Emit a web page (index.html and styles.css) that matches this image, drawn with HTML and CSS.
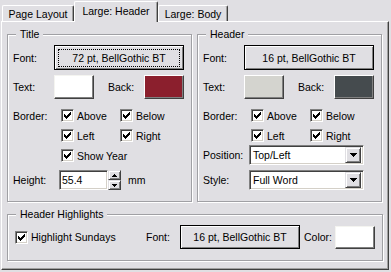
FILE: index.html
```html
<!DOCTYPE html>
<html>
<head>
<meta charset="utf-8">
<title>Large: Header</title>
<link rel="stylesheet" href="styles.css">
</head>
<body>
<div class="tabs">
  <div class="tab tab-first">Page Layout</div>
  <div class="tab tab-active">Large: Header</div>
  <div class="tab tab-last">Large: Body</div>
</div>
<div class="panel">
  <div class="cols">
    <div class="group">
      <div class="legend">Title</div>
      <div class="row r-font"><span class="lbl">Font:</span><div class="btn btn-wide btn-focused"><span class="focus">72 pt, BellGothic BT</span></div></div>
      <div class="row r-color"><span class="lbl">Text:</span><span class="swatch sw-white"></span><span class="lbl lbl-back">Back:</span><span class="swatch sw-red"></span></div>
      <div class="row r-chk1"><span class="lbl lbl-chk">Border:</span>
        <span class="chk-item"><span class="chk"><svg width="7" height="7" viewBox="0 0 7 7" shape-rendering="crispEdges"><path d="M0 2h1v1h1v1h1v-1h1v-1h1v-1h1v-1h1v3h-1v1h-1v1h-1v1h-1v1h-1v-1h-1v-1h-1z" fill="#000"/></svg></span>Above</span>
        <span class="chk-item"><span class="chk"><svg width="7" height="7" viewBox="0 0 7 7" shape-rendering="crispEdges"><path d="M0 2h1v1h1v1h1v-1h1v-1h1v-1h1v-1h1v3h-1v1h-1v1h-1v1h-1v1h-1v-1h-1v-1h-1z" fill="#000"/></svg></span>Below</span>
      </div>
      <div class="row r-chk"><span class="lbl lbl-chk"></span>
        <span class="chk-item"><span class="chk"><svg width="7" height="7" viewBox="0 0 7 7" shape-rendering="crispEdges"><path d="M0 2h1v1h1v1h1v-1h1v-1h1v-1h1v-1h1v3h-1v1h-1v1h-1v1h-1v1h-1v-1h-1v-1h-1z" fill="#000"/></svg></span>Left</span>
        <span class="chk-item"><span class="chk"><svg width="7" height="7" viewBox="0 0 7 7" shape-rendering="crispEdges"><path d="M0 2h1v1h1v1h1v-1h1v-1h1v-1h1v-1h1v3h-1v1h-1v1h-1v1h-1v1h-1v-1h-1v-1h-1z" fill="#000"/></svg></span>Right</span>
      </div>
      <div class="row r-chk"><span class="lbl lbl-chk"></span>
        <span class="chk-item"><span class="chk"><svg width="7" height="7" viewBox="0 0 7 7" shape-rendering="crispEdges"><path d="M0 2h1v1h1v1h1v-1h1v-1h1v-1h1v-1h1v3h-1v1h-1v1h-1v1h-1v1h-1v-1h-1v-1h-1z" fill="#000"/></svg></span>Show Year</span>
      </div>
      <div class="row r-height"><span class="lbl lbl-field">Height:</span>
        <span class="field field-num">55.4</span>
        <span class="spin">
          <span class="spin-btn"><svg width="5" height="3" viewBox="0 0 5 3" shape-rendering="crispEdges"><path d="M2 0h1v1h1v1h1v1h-5v-1h1v-1h1z" fill="#000"/></svg></span>
          <span class="spin-btn"><svg width="5" height="3" viewBox="0 0 5 3" shape-rendering="crispEdges"><path d="M0 0h5v1h-1v1h-1v1h-1v-1h-1v-1h-1z" fill="#000"/></svg></span>
        </span>
        <span class="unit">mm</span>
      </div>
    </div>
    <div class="group">
      <div class="legend">Header</div>
      <div class="row r-font"><span class="lbl">Font:</span><div class="btn btn-wide">16 pt, BellGothic BT</div></div>
      <div class="row r-color"><span class="lbl">Text:</span><span class="swatch sw-light"></span><span class="lbl lbl-back">Back:</span><span class="swatch sw-slate"></span></div>
      <div class="row r-chk1"><span class="lbl lbl-chk">Border:</span>
        <span class="chk-item"><span class="chk"><svg width="7" height="7" viewBox="0 0 7 7" shape-rendering="crispEdges"><path d="M0 2h1v1h1v1h1v-1h1v-1h1v-1h1v-1h1v3h-1v1h-1v1h-1v1h-1v1h-1v-1h-1v-1h-1z" fill="#000"/></svg></span>Above</span>
        <span class="chk-item"><span class="chk"><svg width="7" height="7" viewBox="0 0 7 7" shape-rendering="crispEdges"><path d="M0 2h1v1h1v1h1v-1h1v-1h1v-1h1v-1h1v3h-1v1h-1v1h-1v1h-1v1h-1v-1h-1v-1h-1z" fill="#000"/></svg></span>Below</span>
      </div>
      <div class="row r-chk"><span class="lbl lbl-chk"></span>
        <span class="chk-item"><span class="chk"><svg width="7" height="7" viewBox="0 0 7 7" shape-rendering="crispEdges"><path d="M0 2h1v1h1v1h1v-1h1v-1h1v-1h1v-1h1v3h-1v1h-1v1h-1v1h-1v1h-1v-1h-1v-1h-1z" fill="#000"/></svg></span>Left</span>
        <span class="chk-item"><span class="chk"><svg width="7" height="7" viewBox="0 0 7 7" shape-rendering="crispEdges"><path d="M0 2h1v1h1v1h1v-1h1v-1h1v-1h1v-1h1v3h-1v1h-1v1h-1v1h-1v1h-1v-1h-1v-1h-1z" fill="#000"/></svg></span>Right</span>
      </div>
      <div class="row r-pos"><span class="lbl lbl-field">Position:</span>
        <span class="field select"><span class="sel-text">Top/Left</span><span class="drop"><svg width="7" height="4" viewBox="0 0 7 4" shape-rendering="crispEdges"><path d="M0 0h7v1h-1v1h-1v1h-1v1h-1v-1h-1v-1h-1v-1h-1z" fill="#000"/></svg></span></span>
      </div>
      <div class="row r-style"><span class="lbl lbl-field">Style:</span>
        <span class="field select"><span class="sel-text">Full Word</span><span class="drop"><svg width="7" height="4" viewBox="0 0 7 4" shape-rendering="crispEdges"><path d="M0 0h7v1h-1v1h-1v1h-1v1h-1v-1h-1v-1h-1v-1h-1z" fill="#000"/></svg></span></span>
      </div>
    </div>
  </div>
  <div class="group hl">
    <div class="legend">Header Highlights</div>
    <div class="row r-hl">
      <span class="chk-item chk-hl"><span class="chk"><svg width="7" height="7" viewBox="0 0 7 7" shape-rendering="crispEdges"><path d="M0 2h1v1h1v1h1v-1h1v-1h1v-1h1v-1h1v3h-1v1h-1v1h-1v1h-1v1h-1v-1h-1v-1h-1z" fill="#000"/></svg></span>Highlight Sundays</span>
      <span class="lbl lbl-hlfont">Font:</span>
      <div class="btn btn-hl">16 pt, BellGothic BT</div>
      <span class="lbl lbl-colorname">Color:</span>
      <span class="swatch sw-white sw-hl"></span>
    </div>
  </div>
</div>
</body>
</html>
```

FILE: styles.css
```css
* { box-sizing: border-box; }
html, body { margin: 0; padding: 0; }
body {
  background: #e0dfe3;
  font-family: "Liberation Sans", Arial, sans-serif;
  font-size: 10.5px;
  color: #000;
  width: 391px;
  height: 272px;
  overflow: hidden;
}

/* tabs */
.tabs {
  display: flex;
  align-items: flex-end;
  height: 21px;
  padding-left: 2px;
}
.tab {
  height: 16px;
  border-top: 1px solid #fff;
  border-left: 1px solid #fff;
  border-right: 1px solid #404040;
  box-shadow: inset -1px 0 0 #a0a0a0;
  border-radius: 2px 2px 0 0;
  display: flex;
  align-items: center;
  justify-content: center;
  background: #e0dfe3;
  white-space: nowrap;
}
.tab-first { width: 72px; }
.tab-active {
  width: 84px;
  height: 21px;
  margin-bottom: -1px;
  padding-bottom: 2px;
  position: relative;
  z-index: 1;
}
.tab-last { width: 70px; }

/* panel */
.panel {
  margin-left: 1px;
  width: 388px;
  height: 249px;
  border-top: 1px solid #fff;
  border-left: 1px solid #fff;
  border-right: 1px solid #404040;
  border-bottom: 1px solid #404040;
  box-shadow: inset -1px -1px 0 #a0a0a0;
  padding: 12px 5px 0 5px;
}
.cols {
  display: flex;
  gap: 5px;
}
.group {
  border: 1px solid #a0a0a4;
  box-shadow: 1px 1px 0 #fff, inset 1px 1px 0 #fff;
  padding: 0 5px;
}
.cols .group {
  width: 185px;
  height: 168px;
}
.legend {
  display: table;
  margin: -7px 0 0 3px;
  padding: 0 4px;
  background: #e0dfe3;
  line-height: 13px;
  height: 13px;
  white-space: nowrap;
}

/* rows */
.row {
  display: flex;
  align-items: center;
  white-space: nowrap;
}
.r-font { height: 25px; margin-top: 4px; }
.r-color { height: 24px; margin-top: 5px; }
.r-chk1 { height: 13px; margin-top: 10px; }
.r-chk { height: 13px; margin-top: 7px; }
.r-height { height: 20px; margin-top: 8px; }
.r-pos { height: 20px; margin-top: 3px; }
.r-style { height: 20px; margin-top: 5px; }

.lbl { width: 41px; flex: none; }
.lbl-chk { width: 48px; }
.lbl-field { width: 46px; }
.lbl-back { width: 36px; margin-left: 14px; }

/* buttons */
.btn {
  display: flex;
  align-items: center;
  justify-content: center;
  background: #e0dfe3;
  border: 1px solid #000;
  box-shadow: inset 1px 1px 0 #fff, inset -1px -1px 0 #808080;
  white-space: nowrap;
}
.btn-wide { width: 130px; height: 25px; }
.btn-focused { align-items: stretch; }
.focus {
  flex: 1;
  display: flex;
  align-items: center;
  justify-content: center;
  margin: 3px 3px 2px 3px;
  border: 1px dotted #000;
}

/* colour swatches */
.swatch {
  width: 40px;
  height: 24px;
  flex: none;
  border: 1px solid;
  border-color: #fff #404040 #404040 #fff;
  box-shadow: inset -1px -1px 0 #808080;
}
.sw-white { background: #fff; border-color: #f4f4f0 #404040 #404040 #f4f4f0; }
.sw-red { background: #8b1f2d; }
.sw-light { background: #d4d4cf; }
.sw-slate { background: #454b4e; }

/* checkboxes */
.chk-item {
  display: flex;
  align-items: center;
  gap: 3px;
  width: 59px;
  flex: none;
}
.chk {
  width: 13px;
  height: 13px;
  flex: none;
  background: #fff;
  border: 1px solid;
  border-color: #808080 #fff #fff #808080;
  box-shadow: inset 1px 1px 0 #404040, inset -1px -1px 0 #d4d0c8;
  display: flex;
  align-items: center;
  justify-content: center;
}
.chk svg { display: block; }

/* fields */
.field {
  height: 20px;
  background: #fff;
  border: 1px solid;
  border-color: #808080 #fff #fff #808080;
  box-shadow: inset 1px 1px 0 #404040, inset -1px -1px 0 #d4d0c8;
  display: flex;
  align-items: center;
  flex: none;
}
.field-num { width: 49px; padding-left: 2px; }
.spin {
  display: flex;
  flex-direction: column;
  width: 13px;
  height: 20px;
  flex: none;
}
.spin-btn {
  height: 10px;
  background: #e0dfe3;
  border: 1px solid;
  border-color: #e0dfe3 #404040 #404040 #e0dfe3;
  box-shadow: inset 1px 1px 0 #fff, inset -1px -1px 0 #808080;
  display: flex;
  align-items: center;
  justify-content: center;
}
.spin-btn svg { display: block; }
.unit { margin-left: 7px; }

.select { width: 115px; padding: 0 2px 0 2px; }
.sel-text { flex: 1; padding-left: 1px; }
.drop {
  width: 16px;
  height: 16px;
  background: #e0dfe3;
  border: 1px solid;
  border-color: #e0dfe3 #404040 #404040 #e0dfe3;
  box-shadow: inset 1px 1px 0 #fff, inset -1px -1px 0 #808080;
  display: flex;
  align-items: center;
  justify-content: center;
  flex: none;
}
.drop svg { display: block; }

/* highlights group */
.hl {
  margin-top: 12px;
  height: 47px;
}
.r-hl { height: 24px; margin-top: 4px; }
.chk-hl { width: 131px; margin-left: 2px; }
.lbl-hlfont { width: 34px; }
.btn-hl { width: 120px; height: 24px; }
.lbl-colorname { width: 31px; margin-left: 4px; }
.sw-hl { height: 23px; }
```
